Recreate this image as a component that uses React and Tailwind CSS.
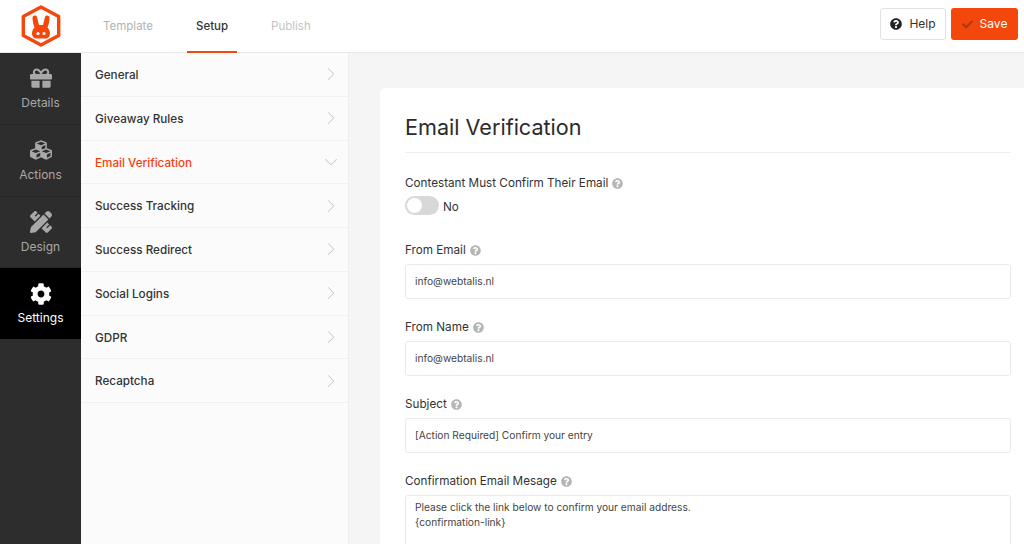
import React from "react";
import { FaGift, FaCubes, FaPencilRuler, FaCog, FaQuestionCircle, FaCheck } from "react-icons/fa";
import { ChevronRight, ChevronDown } from "lucide-react";

const sideItems = [
  { label: "Details", icon: FaGift },
  { label: "Actions", icon: FaCubes },
  { label: "Design", icon: FaPencilRuler },
  { label: "Settings", icon: FaCog, active: true },
];

const menuItems = [
  "General",
  "Giveaway Rules",
  "Email Verification",
  "Success Tracking",
  "Success Redirect",
  "Social Logins",
  "GDPR",
  "Recaptcha",
];

const Logo = () => (
  <svg width="40" height="42" viewBox="0 0 40 42">
    <path d="M20 2 L37.700 11.500 V30.500 L20 40 L2.300 30.500 V11.500 Z" fill="none" stroke="#f4470b" strokeWidth="3.400" strokeLinejoin="round" />
    <path d="M11.500 12.500C11.500 10.500 15 9.500 16 12L18 20H22L24 12C25 9.500 28.500 10.500 28.500 12.500C28.500 16 27.500 20 26.500 22.500C28 24 29 26 29 28.500C29 31.500 27 33.500 24 33.500H16C13 33.500 11 31.500 11 28.500C11 26 12 24 13.500 22.500C12.500 20 11.500 16 11.500 12.500Z" fill="#f4470b" />
    <circle cx="17" cy="28.500" r="1.600" fill="#fff" />
    <circle cx="23" cy="28.500" r="1.600" fill="#fff" />
  </svg>
);

const Label = ({ children }) => (
  <div className="flex items-center gap-[4px] text-[11.700px] leading-[16px] text-[#333]">
    {children}
    <FaQuestionCircle className="text-[11px] text-[#b5b5b5]" />
  </div>
);

const Field = ({ label, value }) => (
  <div>
    <Label>{label}</Label>
    <div className="mt-[6px] h-[35px] flex items-center px-[9px] bg-white border border-[#eaeaea] rounded-[3px] text-[10.200px] text-[#444]">
      {value}
    </div>
  </div>
);

const App = () => {
  return (
    <div className="w-[1024px] h-[544px] overflow-hidden flex flex-col bg-[#f5f5f5] font-['Inter',sans-serif]">
      <header className="h-[53px] shrink-0 flex items-center bg-white border-b border-[#e8e8e8]">
        <div className="w-[81px] pl-[1px] flex justify-center">
          <Logo />
        </div>
        <nav className="flex h-full gap-[25px] ml-[13px] text-[11.500px]">
          <div className="px-[9px] pt-[1px] flex items-center text-[#b3b3b3]">Template</div>
          <div className="px-[9px] pt-[3px] flex items-center text-[#333] font-medium border-b-2 border-[#f4470b] -mb-px">Setup</div>
          <div className="px-[9px] pt-[1px] flex items-center text-[#c4c4c4]">Publish</div>
        </nav>
        <div className="ml-auto h-full flex items-start gap-[5px] pr-[6px] pt-[8px]">
          <button className="w-[66px] h-[32px] flex items-center justify-center gap-[7px] bg-white border border-[#e2e2e2] rounded-[3px] text-[12px] text-[#333]">
            <FaQuestionCircle className="text-[12px] text-[#222]" />
            Help
          </button>
          <button className="w-[67px] h-[32px] flex items-center justify-center gap-[7px] bg-[#f4470b] rounded-[3px] text-[12px] text-white">
            <FaCheck className="text-[11px] text-[#a83a12]" />
            Save
          </button>
        </div>
      </header>

      <div className="flex flex-1 min-h-0">
        <aside className="w-[81px] shrink-0 bg-[#2d2d2d]">
          {sideItems.map((item) => {
            const Icon = item.icon;
            return (
              <div
                key={item.label}
                className={
                  item.active
                    ? "h-[71px] pt-[2px] flex flex-col items-center justify-center gap-[5px] bg-black text-white"
                    : "h-[71.800px] pt-[2px] flex flex-col items-center justify-center gap-[6px] border-b border-[#262626] text-[#a8a8a8]"
                }
              >
                <Icon className="text-[22px]" />
                <span className="text-[12px] leading-[16px]">{item.label}</span>
              </div>
            );
          })}
        </aside>

        <div className="w-[268px] shrink-0 bg-[#fbfbfb] border-r border-[#eeeeee]">
          {menuItems.map((item) => {
            const active = item === "Email Verification";
            return (
              <div key={item} className="h-[43.750px] flex items-center justify-between pl-[14px] pr-[6px] border-b border-[#f1f1f1]">
                <span className={active ? "pt-[3px] text-[11.700px] font-medium text-[#f4400b]" : "pt-[3px] text-[11.700px] font-medium text-[#333]"}>{item}</span>
                {active ? (
                  <ChevronDown size={22} strokeWidth={0.9} className="text-[#b5b5b5]" />
                ) : (
                  <ChevronRight size={22} strokeWidth={0.9} className="text-[#b5b5b5]" />
                )}
              </div>
            );
          })}
        </div>

        <main className="flex-1 min-w-0 pl-[31px] pt-[35px]">
          <div className="w-[656px] h-[480px] bg-white rounded-[6px] pl-[25px] pr-[25px] pt-[24px]">
            <h1 className="text-[21.600px] leading-[30px] text-[#2b2b2b] pb-[10px] border-b border-[#eeeeee]">Email Verification</h1>
            <div className="mt-[22px]">
              <Label>Contestant Must Confirm Their Email</Label>
              <div className="mt-[5px] flex items-start gap-[4px]">
                <div className="w-[34px] h-[19px] rounded-full bg-[#d8d8d8] p-[2px]">
                  <div className="w-[15px] h-[15px] rounded-full bg-white" />
                </div>
                <span className="text-[11.700px] leading-[16px] mt-[3px] text-[#333]">No</span>
              </div>
            </div>
            <div className="mt-[27px] flex flex-col gap-[20px]">
              <Field label="From Email" value="info@webtalis.nl" />
              <Field label="From Name" value="info@webtalis.nl" />
              <Field label="Subject" value="[Action Required] Confirm your entry" />
              <div>
                <Label>Confirmation Email Mesage</Label>
                <div className="mt-[6px] h-[120px] px-[9px] py-[3.500px] bg-white border border-[#eaeaea] rounded-[3px] text-[10.200px] leading-[15px] text-[#444]">
                  <p>Please click the link below to confirm your email address.</p>
                  <p>{"{confirmation-link}"}</p>
                </div>
              </div>
            </div>
          </div>
        </main>
      </div>
    </div>
  );
};

export default App;
